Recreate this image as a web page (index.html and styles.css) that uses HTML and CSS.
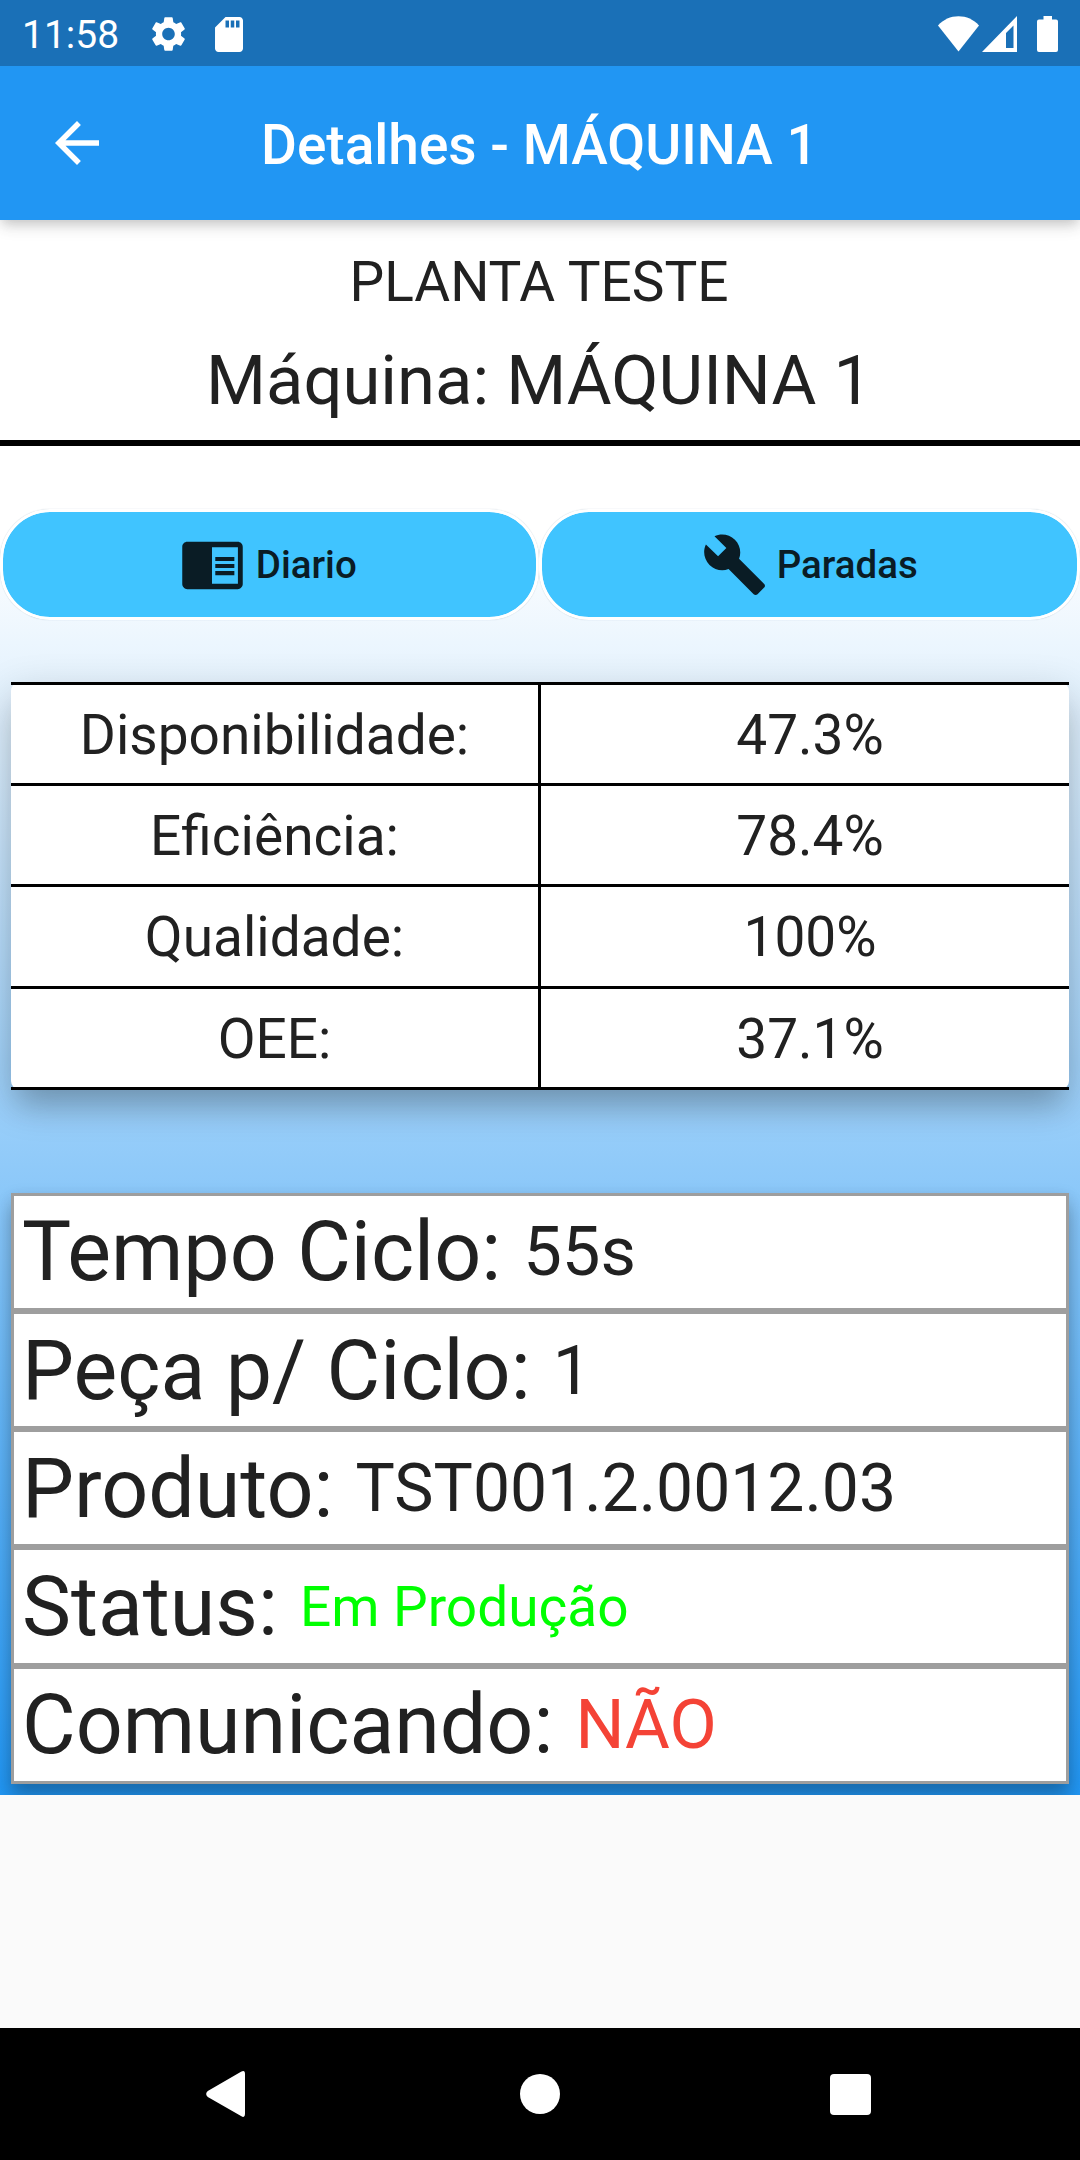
FILE: index.html
```html
<!DOCTYPE html>
<html lang="pt-BR">
<head>
<meta charset="utf-8">
<title>Detalhes - MÁQUINA 1</title>
<link rel="stylesheet" href="styles.css">
</head>
<body>
<div class="screen">
  <div class="statusbar">
    <span class="clock">11:58</span>
    <svg class="gear" viewBox="2 2 20 20"><path d="M19.14 12.94c.04-.3.06-.61.06-.94 0-.32-.02-.64-.07-.94l2.03-1.58c.18-.14.23-.41.12-.61l-1.92-3.32c-.12-.22-.37-.29-.59-.22l-2.39.96c-.5-.38-1.03-.7-1.62-.94l-.36-2.54c-.04-.24-.24-.41-.48-.41h-3.84c-.24 0-.43.17-.47.41l-.36 2.54c-.59.24-1.13.57-1.62.94l-2.39-.96c-.22-.08-.47 0-.59.22L2.74 8.87c-.12.21-.08.47.12.61l2.03 1.58c-.05.3-.09.63-.09.94s.02.64.07.94l-2.03 1.58c-.18.14-.23.41-.12.61l1.92 3.32c.12.22.37.29.59.22l2.39-.96c.5.38 1.03.7 1.62.94l.36 2.54c.05.24.24.41.48.41h3.84c.24 0 .44-.17.47-.41l.36-2.54c.59-.24 1.13-.56 1.62-.94l2.39.96c.22.08.47 0 .59-.22l1.92-3.32c.12-.22.07-.47-.12-.61l-2.01-1.58zM12 15.6c-1.98 0-3.6-1.62-3.6-3.6s1.62-3.6 3.6-3.6 3.6 1.62 3.6 3.6-1.62 3.6-3.6 3.6z"/></svg>
    <svg class="sd" viewBox="4 2 16 20"><path d="M18 2h-8L4.020 8 4 20c0 1.100.9 2 2 2h12c1.100 0 2-.9 2-2V4c0-1.100-.9-2-2-2zm-6 6h-2V4h2v4zm3 0h-2V4h2v4zm3 0h-2V4h2v4z"/></svg>
    <span class="spacer"></span>
    <svg class="wifi" viewBox="0 0 41 36"><path d="M20.500 35.500 0 9.500C5.500 3.500 12.500.3 20.500.3S35.500 3.500 41 9.500z"/></svg>
    <svg class="signal" viewBox="0 0 35 36"><path fill-rule="evenodd" d="M35 0v36H0zM31.500 9.500 24 17v15h7.500z"/></svg>
    <svg class="battery" viewBox="0 0 21 36"><path d="M6.500 0h8.500v3.500h4a2 2 0 0 1 2 2V34a2 2 0 0 1-2 2H2a2 2 0 0 1-2-2V5.500a2 2 0 0 1 2-2h4.500z"/></svg>
  </div>
  <header class="appbar">
    <svg class="back" viewBox="4 4 16 16"><path d="M20 11H7.830l5.590-5.590L12 4l-8 8 8 8 1.410-1.410L7.830 13H20v-2z"/></svg>
    <h1 class="title">Detalhes - MÁQUINA 1</h1>
  </header>
  <main class="content">
    <section class="heading">
      <div class="plant">PLANTA TESTE</div>
      <div class="machine">Máquina: MÁQUINA 1</div>
    </section>
    <div class="actions">
      <button class="action">
        <svg class="icon" viewBox="0 0 24 24"><path d="M21.900 2.700H2.100c-1.100 0-2 .9-2 2v14.600c0 1.100.9 2 2 2h19.800c1.100 0 2-.9 2-2V4.700c0-1.100-.9-2-2-2zM22 19.200H11.800V4.800H22z"/><path d="M13.100 8.700h7.500v1.500h-7.500zM13.100 11.400h7.500v1.600h-7.500zM13.100 14.200h7.500v1.600h-7.500z"/></svg>
        <span>Diario</span>
      </button>
      <button class="action stops">
        <svg class="icon" viewBox=".9 .9 22.100 22.100"><path d="M22.700 19l-9.100-9.100c.9-2.300.4-5-1.500-6.900-2-2-5-2.400-7.400-1.300L9 6 6 9 1.600 4.700C.4 7.100.9 10.100 2.900 12.100c1.900 1.900 4.600 2.400 6.900 1.500l9.100 9.100c.4.4 1 .4 1.400 0l2.300-2.300c.5-.4.5-1.100.1-1.400z"/></svg>
        <span>Paradas</span>
      </button>
    </div>
    <div class="metrics">
      <div class="row"><div class="cell">Disponibilidade:</div><div class="cell">47.3%</div></div>
      <div class="row"><div class="cell">Eficiência:</div><div class="cell">78.4%</div></div>
      <div class="row"><div class="cell">Qualidade:</div><div class="cell">100%</div></div>
      <div class="row"><div class="cell">OEE:</div><div class="cell">37.1%</div></div>
    </div>
    <div class="details">
      <div class="item"><span>Tempo Ciclo:</span><span class="value">55s</span></div>
      <div class="item"><span>Peça p/ Ciclo:</span><span class="value">1</span></div>
      <div class="item"><span>Produto:</span><span class="value code">TST001.2.0012.03</span></div>
      <div class="item"><span>Status:</span><span class="value running">Em Produção</span></div>
      <div class="item"><span>Comunicando:</span><span class="value offline">NÃO</span></div>
    </div>
  </main>
  <nav class="navbar">
    <svg class="nav-back" viewBox="0 0 39 46"><path d="M35 .8Q39-1.500 39 3V43Q39 47.500 35 45L1.800 26Q-1.500 23 1.800 20z"/></svg>
    <svg class="nav-home" viewBox="0 0 40 40"><circle cx="20" cy="20" r="20"/></svg>
    <svg class="nav-recent" viewBox="0 0 41 41"><rect width="41" height="41" rx="4"/></svg>
  </nav>
</div>
</body>
</html>
```
FILE: styles.css
```css
* { box-sizing: border-box; }
body {
  margin: 0;
  font-family: Roboto, sans-serif;
  color: #212121;
  background: #fafafa;
}
svg { display: block; fill: #fff; flex: none; }
.screen { width: 1080px; height: 2160px; display: flex; flex-direction: column; overflow: hidden; }

.statusbar {
  height: 66px;
  flex: none;
  display: flex;
  align-items: center;
  padding: 2px 22px 0 22px;
  background: #1a70b7;
  color: #fff;
  position: relative;
  z-index: 2;
}
.clock { font-size: 39px; line-height: 66px; width: 129px; padding-top: 1px; }
.gear { width: 35px; height: 36px; }
.sd { width: 28px; height: 35px; margin-left: 29px; }
.spacer { flex: 1; }
.wifi { width: 41px; height: 36px; }
.signal { width: 35px; height: 36px; margin-left: 3px; }
.battery { width: 21px; height: 36px; margin-left: 20px; }

.appbar {
  height: 154px;
  flex: none;
  display: flex;
  align-items: center;
  padding-left: 55px;
  background: #2196f3;
  color: #fff;
  position: relative;
  z-index: 1;
  box-shadow: 0 5px 11px -3px rgba(0,0,0,.16), 0 9px 14px rgba(0,0,0,.07), 0 3px 20px rgba(0,0,0,.05);
}
.back { width: 44px; height: 44px; }
.title { margin: 4px 0 0 162px; font-size: 55px; font-weight: 500; line-height: 65px; white-space: nowrap; }

.content {
  height: 1575px;
  flex: none;
  overflow: hidden;
  background: linear-gradient(#fff 0, #fff 20%, #90caf9 60%, #2196f3 100%);
}
.heading {
  height: 226px;
  border-bottom: 6px solid #000;
  background: #fff;
  text-align: center;
  padding: 29px 2px 0 0;
}
.plant { font-size: 55px; line-height: 66px; }
.machine { font-size: 68.75px; line-height: 82px; margin-top: 25px; }

.actions { display: flex; margin-top: 63px; }
.action {
  flex: 1;
  height: 111px;
  display: flex;
  align-items: center;
  justify-content: center;
  gap: 13px;
  padding: 0;
  border: 3px solid #fff;
  border-radius: 50px;
  background: #40c4ff;
  background-clip: padding-box;
  box-shadow: 0 0 1px rgba(0,60,100,.3);
  color: #0a1c25;
  font: 500 38.5px/46px Roboto, sans-serif;
}
.stops { gap: 12px; padding-left: 3px; }
.icon { width: 61px; height: 61px; margin-top: 2px; fill: #0a1c25; }
.stops .icon { margin-top: 0; }

.metrics {
  margin: 62px 11px 0;
  border-radius: 9px;
  background: #fff;
  box-shadow: 0 22px 30px -8px rgba(0,0,0,.18), 0 12px 40px 2px rgba(0,0,0,.16);
}
.row { display: flex; height: 101.2px; border-bottom: 3px solid #000; }
.row:first-child { height: 104.2px; border-top: 3px solid #000; }
.cell { width: 527px; text-align: center; font-size: 55px; line-height: 101px; }
.cell + .cell { width: 531px; padding-left: 10px; border-left: 3px solid #000; }

.details {
  margin: 103px 11px 0;
  box-shadow: 0 14px 18px rgba(0,0,0,.24), 0 3px 14px rgba(0,0,0,.1);
}
.item {
  height: 118.2px;
  display: flex;
  align-items: center;
  gap: 22px;
  padding-left: 8px;
  border: 3px solid #9e9e9e;
  background: #fff;
  font-size: 82.5px;
  line-height: 97px;
}
.value { font-size: 68.75px; }
.code { font-size: 66px; }
.running { font-size: 55px; padding-top: 2px; color: #0f0; }
.offline { color: #f44336; }

.navbar {
  height: 132px;
  flex: none;
  margin-top: auto;
  display: flex;
  align-items: center;
  justify-content: space-between;
  padding: 0 209px 0 206px;
  background: #000;
}
.nav-back { width: 39px; height: 46px; }
.nav-home { width: 40px; height: 40px; margin-left: 5px; }
.nav-recent { width: 41px; height: 41px; }
```
